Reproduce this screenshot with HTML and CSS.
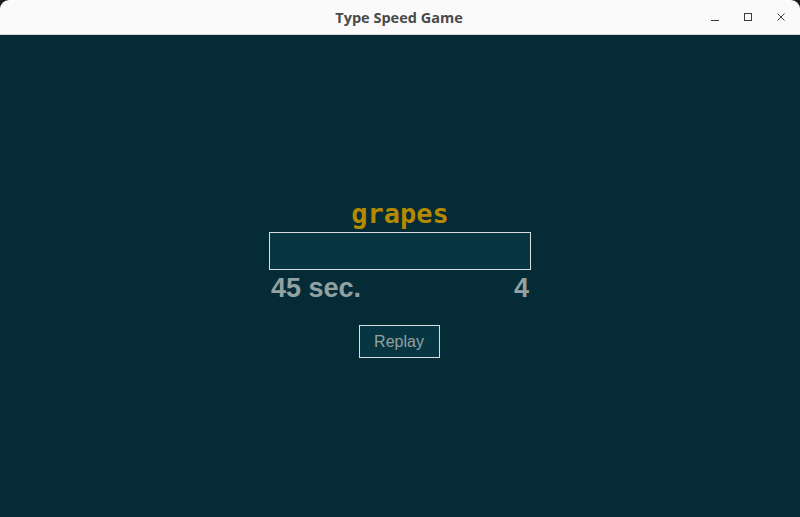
FILE: index.html
```html
<!DOCTYPE html>
<html>
<head>
<meta charset="utf-8">
<title>Type Speed Game</title>
<link rel="stylesheet" href="styles.css">
</head>
<body>
<div class="window">
  <header class="titlebar">
    <div class="title">Type Speed Game</div>
    <div class="controls">
      <span class="ctl">
        <svg width="12" height="12" viewBox="0 0 12 12"><path d="M2 9.5h8" stroke="#3c3c3c" stroke-width="1"/></svg>
      </span>
      <span class="ctl">
        <svg width="12" height="12" viewBox="0 0 12 12"><rect x="2.5" y="2.5" width="7" height="7" fill="none" stroke="#3c3c3c" stroke-width="1"/></svg>
      </span>
      <span class="ctl">
        <svg width="12" height="12" viewBox="0 0 12 12"><path d="M2.5 2.5l7 7M9.5 2.5l-7 7" stroke="#3c3c3c" stroke-width="1"/></svg>
      </span>
    </div>
  </header>
  <main class="game">
    <div class="word">grapes</div>
    <input class="entry" type="text">
    <div class="stats">
      <span class="time">45 sec.</span>
      <span class="score">4</span>
    </div>
    <button class="replay">Replay</button>
  </main>
</div>
</body>
</html>
```
FILE: styles.css
```css
html, body {
  margin: 0;
  padding: 0;
  background: #1b1b1b;
}
.window {
  width: 800px;
  height: 517px;
  display: flex;
  flex-direction: column;
  overflow: hidden;
}
.titlebar {
  height: 35px;
  box-sizing: border-box;
  background: #fafafa;
  border-bottom: 1px solid #d6d6d6;
  border-radius: 9px 9px 0 0;
  position: relative;
  display: flex;
  align-items: center;
  justify-content: center;
  flex: none;
}
.title {
  font-family: "Open Sans", "DejaVu Sans", sans-serif;
  font-weight: 700;
  font-size: 14.5px;
  color: #4a4a4a;
  letter-spacing: 0;
  margin-left: -2px;
}
.controls {
  position: absolute;
  right: 13px;
  top: 11px;
  display: flex;
  gap: 21px;
}
.ctl {
  width: 12px;
  height: 12px;
  display: block;
}
.ctl svg { display: block; }
.game {
  flex: 1;
  background: #042b36;
  display: flex;
  flex-direction: column;
  align-items: center;
  padding-top: 163px;
}
.word {
  font-family: "DejaVu Sans Mono", monospace;
  font-weight: 700;
  font-size: 27px;
  line-height: 31px;
  color: #b58900;
}
.entry {
  margin: 3px 0 0 0;
  width: 262px;
  height: 38px;
  box-sizing: border-box;
  background: #073642;
  border: 1px solid #dcdede;
  outline: none;
  padding: 0 6px;
  color: #93a1a1;
}
.stats {
  margin-top: 3px;
  width: 262px;
  box-sizing: border-box;
  padding: 0 2px;
  display: flex;
  justify-content: space-between;
  font-family: "Liberation Sans", Arial, sans-serif;
  font-weight: 700;
  font-size: 27px;
  line-height: 30px;
  color: #93a1a1;
}
.replay {
  margin: 22px 2px 0 0;
  width: 81px;
  height: 33px;
  box-sizing: border-box;
  background: #073642;
  border: 1px solid #dcdede;
  color: #93a1a1;
  font-family: "Liberation Sans", Arial, sans-serif;
  font-size: 16px;
  padding: 0;
}
```
